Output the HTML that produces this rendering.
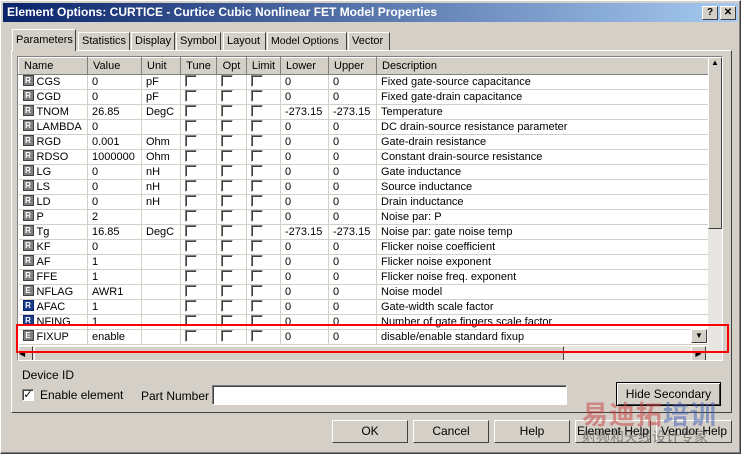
<!DOCTYPE html>
<html><head><meta charset="utf-8"><style>
*{box-sizing:border-box;margin:0;padding:0}
body{width:741px;height:454px;background:#d4d0c8;font-family:"Liberation Sans",Tahoma,sans-serif;font-size:11px;color:#000;position:relative;overflow:hidden}
.abs{position:absolute}
.title{left:3px;top:3px;width:735px;height:19px;background:linear-gradient(90deg,#0a246a,#a6caf0);color:#fff;font-weight:bold;font-size:12px;line-height:19px;padding-left:4px}
.frame{left:0;top:0;width:741px;height:454px;border:1px solid #fff;border-right-color:#404040;border-bottom-color:#404040;box-shadow:inset -1px -1px #808080}
.tbtn{top:6px;width:16px;height:14px;background:#d4d0c8;border:1px solid;border-color:#fff #404040 #404040 #fff;font-size:10px;font-weight:bold;text-align:center;line-height:12px}
.tab{top:32px;height:18px;border:1px solid;border-color:#fff #404040 transparent #fff;border-bottom:none;padding:0 3px;line-height:17px;background:#d4d0c8;white-space:nowrap}
.panel{left:11px;top:50px;width:721px;height:363px;border:1px solid;border-color:#fff #404040 #404040 #fff}
.grid{left:17px;top:56px;width:706px;height:305px;border:1px solid;border-color:#808080 #fff #fff #808080;background:#fff;overflow:hidden}
table{border-collapse:collapse;table-layout:fixed;position:absolute;left:0;top:0}
tr{height:15px}
td{height:15px;border-right:1px solid #d4d0c8;border-bottom:1px solid #d4d0c8;padding:0 0 0 4px;white-space:nowrap;overflow:hidden;line-height:13px;vertical-align:middle}
tr.h{height:17px}
tr.h td{height:17px;background:#d4d0c8;border:1px solid;border-color:#fff #808080 #808080 #fff;padding-left:5px}
.ic{display:inline-block;width:11px;height:11px;background:#808080;color:#fff;font-size:8px;font-weight:bold;text-align:center;line-height:9px;border:1px solid #404040;vertical-align:middle;margin-right:3px;position:relative;top:-1px}
.ic.b{background:#1c3c8c;border-color:#0a246a}
.cb{display:inline-block;width:12px;height:12px;border:1px solid;border-color:#808080 #fff #fff #808080;box-shadow:inset 1px 1px #404040;vertical-align:middle;background:#fff;position:relative;top:-1px}
.btn{top:420px;width:76px;height:23px;border:1px solid;border-color:#fff #404040 #404040 #fff;text-align:center;line-height:21px;font-size:12px}
</style></head><body>
<div class="abs frame"></div>
<div class="abs title">Element Options: CURTICE - Curtice Cubic Nonlinear FET Model Properties</div>
<div class="abs tbtn" style="left:702px">?</div>
<div class="abs tbtn" style="left:720px">✕</div>
<div class="abs panel"></div>
<div class="abs tab" style="left:12px;top:29px;height:22px;width:64px;padding-top:2px">Parameters</div>
<div class="abs tab" style="left:78px;width:52px">Statistics</div>
<div class="abs tab" style="left:131px;width:44px">Display</div>
<div class="abs tab" style="left:176px;width:45px">Symbol</div>
<div class="abs tab" style="left:223px;width:43px">Layout</div>
<div class="abs tab" style="left:267px;width:80px;font-size:10.5px">Model Options</div>
<div class="abs tab" style="left:348px;width:42px">Vector</div>
<div class="abs grid">
<table>
<colgroup><col style="width:69px"><col style="width:54px"><col style="width:39px"><col style="width:36px"><col style="width:30px"><col style="width:34px"><col style="width:48px"><col style="width:48px"><col style="width:332px"></colgroup>
<tr class="h"><td>Name</td><td>Value</td><td>Unit</td><td style="text-align:center;padding:0">Tune</td><td style="text-align:center;padding:0">Opt</td><td style="text-align:center;padding:0">Limit</td><td>Lower</td><td>Upper</td><td>Description</td></tr>
<tr><td><span class="ic">R</span>CGS</td><td>0</td><td>pF</td><td><span class="cb"></span></td><td><span class="cb"></span></td><td><span class="cb"></span></td><td>0</td><td>0</td><td>Fixed gate-source capacitance</td></tr>
<tr><td><span class="ic">R</span>CGD</td><td>0</td><td>pF</td><td><span class="cb"></span></td><td><span class="cb"></span></td><td><span class="cb"></span></td><td>0</td><td>0</td><td>Fixed gate-drain capacitance</td></tr>
<tr><td><span class="ic">R</span>TNOM</td><td>26.85</td><td>DegC</td><td><span class="cb"></span></td><td><span class="cb"></span></td><td><span class="cb"></span></td><td>-273.15</td><td>-273.15</td><td>Temperature</td></tr>
<tr><td><span class="ic">R</span>LAMBDA</td><td>0</td><td></td><td><span class="cb"></span></td><td><span class="cb"></span></td><td><span class="cb"></span></td><td>0</td><td>0</td><td>DC drain-source resistance parameter</td></tr>
<tr><td><span class="ic">R</span>RGD</td><td>0.001</td><td>Ohm</td><td><span class="cb"></span></td><td><span class="cb"></span></td><td><span class="cb"></span></td><td>0</td><td>0</td><td>Gate-drain resistance</td></tr>
<tr><td><span class="ic">R</span>RDSO</td><td>1000000</td><td>Ohm</td><td><span class="cb"></span></td><td><span class="cb"></span></td><td><span class="cb"></span></td><td>0</td><td>0</td><td>Constant drain-source resistance</td></tr>
<tr><td><span class="ic">R</span>LG</td><td>0</td><td>nH</td><td><span class="cb"></span></td><td><span class="cb"></span></td><td><span class="cb"></span></td><td>0</td><td>0</td><td>Gate inductance</td></tr>
<tr><td><span class="ic">R</span>LS</td><td>0</td><td>nH</td><td><span class="cb"></span></td><td><span class="cb"></span></td><td><span class="cb"></span></td><td>0</td><td>0</td><td>Source inductance</td></tr>
<tr><td><span class="ic">R</span>LD</td><td>0</td><td>nH</td><td><span class="cb"></span></td><td><span class="cb"></span></td><td><span class="cb"></span></td><td>0</td><td>0</td><td>Drain inductance</td></tr>
<tr><td><span class="ic">R</span>P</td><td>2</td><td></td><td><span class="cb"></span></td><td><span class="cb"></span></td><td><span class="cb"></span></td><td>0</td><td>0</td><td>Noise par: P</td></tr>
<tr><td><span class="ic">R</span>Tg</td><td>16.85</td><td>DegC</td><td><span class="cb"></span></td><td><span class="cb"></span></td><td><span class="cb"></span></td><td>-273.15</td><td>-273.15</td><td>Noise par: gate noise temp</td></tr>
<tr><td><span class="ic">R</span>KF</td><td>0</td><td></td><td><span class="cb"></span></td><td><span class="cb"></span></td><td><span class="cb"></span></td><td>0</td><td>0</td><td>Flicker noise coefficient</td></tr>
<tr><td><span class="ic">R</span>AF</td><td>1</td><td></td><td><span class="cb"></span></td><td><span class="cb"></span></td><td><span class="cb"></span></td><td>0</td><td>0</td><td>Flicker noise exponent</td></tr>
<tr><td><span class="ic">R</span>FFE</td><td>1</td><td></td><td><span class="cb"></span></td><td><span class="cb"></span></td><td><span class="cb"></span></td><td>0</td><td>0</td><td>Flicker noise freq. exponent</td></tr>
<tr><td><span class="ic">E</span>NFLAG</td><td>AWR1</td><td></td><td><span class="cb"></span></td><td><span class="cb"></span></td><td><span class="cb"></span></td><td>0</td><td>0</td><td>Noise model</td></tr>
<tr><td><span class="ic b">R</span>AFAC</td><td>1</td><td></td><td><span class="cb"></span></td><td><span class="cb"></span></td><td><span class="cb"></span></td><td>0</td><td>0</td><td>Gate-width scale factor</td></tr>
<tr><td><span class="ic b">R</span>NFING</td><td>1</td><td></td><td><span class="cb"></span></td><td><span class="cb"></span></td><td><span class="cb"></span></td><td>0</td><td>0</td><td>Number of gate fingers scale factor</td></tr>
<tr><td><span class="ic">E</span>FIXUP</td><td>enable</td><td></td><td><span class="cb"></span></td><td><span class="cb"></span></td><td><span class="cb"></span></td><td>0</td><td>0</td><td>disable/enable standard fixup</td></tr>
</table>
<div class="abs" style="left:673px;top:272px;width:16px;height:14px;border:1px solid;border-color:#fff #404040 #404040 #fff;background:#d4d0c8;font-size:8px;text-align:center;line-height:12px">▼</div>
<div class="abs" style="left:690px;top:0;width:14px;height:289px;background:#e8e6e2"></div>
<div class="abs" style="left:690px;top:0;width:14px;height:172px;background:#d4d0c8;border:1px solid;border-color:#fff #404040 #404040 #fff;font-size:8px;text-align:center">▲</div>
<div class="abs" style="left:0;top:289px;width:704px;height:15px;background:#e8e6e2"></div>
<div class="abs" style="left:0;top:289px;width:15px;height:15px;background:#d4d0c8;border:1px solid;border-color:#fff #404040 #404040 #fff;font-size:8px;line-height:13px">◀</div>
<div class="abs" style="left:16px;top:289px;width:530px;height:15px;background:#d4d0c8;border:1px solid;border-color:#fff #404040 #404040 #fff"></div>
<div class="abs" style="left:673px;top:289px;width:15px;height:15px;background:#d4d0c8;border:1px solid;border-color:#fff #404040 #404040 #fff;font-size:8px;line-height:13px;text-align:center">▶</div>
</div>
<div class="abs" style="left:16px;top:324px;width:713px;height:29px;border:2px solid #f00"></div>
<div class="abs" style="left:22px;top:368px;font-size:12px">Device ID</div>
<div class="abs cb" style="left:22px;top:389px;font-size:11px;line-height:10px;text-align:center">✓</div>
<div class="abs" style="left:40px;top:388px;font-size:12px">Enable element</div>
<div class="abs" style="left:141px;top:389px;font-size:12px">Part Number</div>
<div class="abs" style="left:212px;top:385px;width:355px;height:20px;background:#fff;border:1px solid;border-color:#808080 #fff #fff #808080;box-shadow:inset 1px 1px #404040"></div>
<div class="abs" style="left:616px;top:382px;width:105px;height:24px;border:1px solid #000;box-shadow:inset 1px 1px #fff,inset -1px -1px #404040;text-align:center;line-height:22px;font-size:12px">Hide Secondary</div>
<div class="abs btn" style="left:332px">OK</div>
<div class="abs btn" style="left:413px">Cancel</div>
<div class="abs btn" style="left:494px">Help</div>
<div class="abs btn" style="left:575px">Element Help</div>
<div class="abs btn" style="left:656px">Vendor Help</div>
<div class="abs" style="left:582px;top:395px;font-size:26px;font-weight:bold;color:rgba(200,60,60,.5);font-family:'Noto Sans CJK SC',sans-serif;letter-spacing:1px">易迪拓<span style="color:rgba(60,90,180,.5)">培训</span></div>
<div class="abs" style="left:582px;top:427px;font-size:14px;color:rgba(60,60,60,.55);font-family:'Noto Sans CJK SC',sans-serif">射频和天线设计专家</div>
</body></html>
